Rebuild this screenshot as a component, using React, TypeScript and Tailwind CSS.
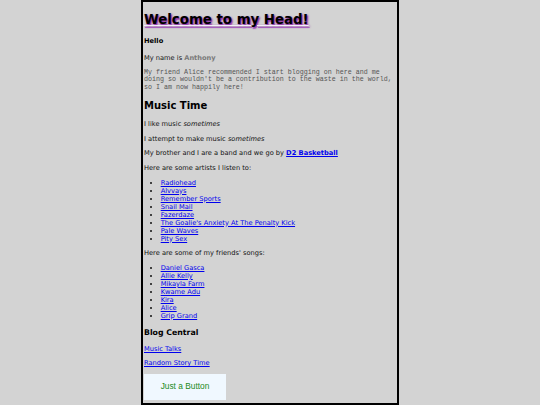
export default function App() {
  const artists = [
    "Radiohead",
    "Alvvays",
    "Remember Sports",
    "Snail Mail",
    "Fazerdaze",
    "The Goalie's Anxiety At The Penalty Kick",
    "Pale Waves",
    "Pity Sex",
  ];
  const friends = ["Daniel Gasca", "Allie Kelly", "Mikayla Farm", "Kwame Adu", "Kira", "Alice", "Grip Grand"];

  const link = "text-[#0000ee] underline";

  return (
    <div className="min-h-screen bg-[#d3d3d3] font-['DejaVu_Sans',sans-serif] text-[6.667px] leading-[1.2] text-[#111]">
      <div className="mx-auto min-h-[405px] w-[258px] border-2 border-black bg-[#d3d3d3] pt-[1.5px] pl-[1px]">
        {/* Header */}
        <h1 className="my-[8.9px] text-[13.33px] font-bold text-black underline decoration-[#f4eef8] [text-shadow:1px_1px_2px_#8a2a9e,1px_2px_1px_#b070c8]">
          Welcome to my Head!
        </h1>
        <h4 className="my-[8.9px] font-bold text-black">Hello</h4>
        <p className="my-[6.667px]">
          My name is <b className="text-[#7a7a7a]">Anthony</b>
        </p>
        <p className="my-[6.667px] font-['Liberation_Mono',monospace] leading-[7.5px] text-[#555]">
          My friend Alice recommended I start blogging on here and me doing so wouldn't be a contribution to the
          waste in the world, so I am now happily here!
        </p>

        {/* Music */}
        <h2 className="my-[8.3px] text-[10px] font-bold text-black">Music Time</h2>
        <p className="my-[6.667px]">
          I like music <i>sometimes</i>
        </p>
        <p className="my-[6.667px]">
          I attempt to make music <i>sometimes</i>
        </p>
        <p className="my-[6.667px]">
          My brother and I are a band and we go by <a className={`${link} font-bold`}>D2 Basketball</a>
        </p>
        <p className="my-[6.667px]">Here are some artists I listen to:</p>
        <ul className="my-[6.667px] list-disc pl-[16.67px]">
          {artists.map(a => (
            <li key={a}>
              <a className={link}>{a}</a>
            </li>
          ))}
        </ul>
        <p className="my-[6.667px]">Here are some of my friends' songs:</p>
        <ul className="my-[6.667px] list-disc pl-[16.67px]">
          {friends.map(f => (
            <li key={f}>
              <a className={link}>{f}</a>
            </li>
          ))}
        </ul>

        {/* Blog */}
        <h3 className="my-[7.8px] text-[7.8px] font-bold text-black">Blog Central</h3>
        <p className="my-[6.667px]">
          <a className={link}>Music Talks</a>
        </p>
        <p className="my-[6.667px]">
          <a className={link}>Random Story Time</a>
        </p>
        <button className="bg-[#f0f8ff] px-[16.67px] py-[8.33px] font-['Liberation_Sans',sans-serif] text-[8.33px] leading-[1.15] text-[#1a8a1a]">
          Just a Button
        </button>
      </div>
    </div>
  );
}
